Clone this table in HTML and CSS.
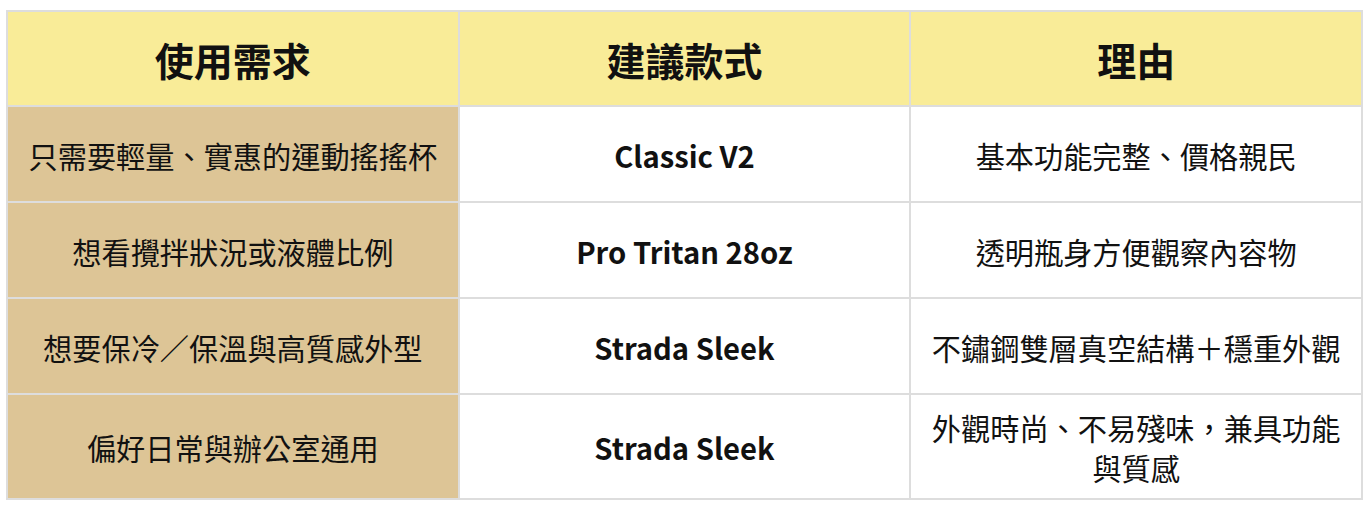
FILE: index.html
```html
<!DOCTYPE html>
<html lang="zh-Hant">
<head>
<meta charset="utf-8">
<link rel="stylesheet" href="styles.css">
</head>
<body>
<div class="wrap">
<table class="cmp">
  <colgroup><col class="c1"><col class="c2"><col class="c3"></colgroup>
  <thead>
    <tr><th>使用需求</th><th>建議款式</th><th>理由</th></tr>
  </thead>
  <tbody>
    <tr><td class="need">只需要輕量、實惠的運動搖搖杯</td><td class="model">Classic V2</td><td>基本功能完整、價格親民</td></tr>
    <tr><td class="need">想看攪拌狀況或液體比例</td><td class="model">Pro Tritan 28oz</td><td>透明瓶身方便觀察內容物</td></tr>
    <tr><td class="need">想要保冷／保溫與高質感外型</td><td class="model">Strada Sleek</td><td>不鏽鋼雙層真空結構＋穩重外觀</td></tr>
    <tr><td class="need">偏好日常與辦公室通用</td><td class="model">Strada Sleek</td><td>外觀時尚、不易殘味，兼具功能與質感</td></tr>
  </tbody>
</table>
</div>
</body>
</html>
```

FILE: styles.css
```css
html, body {
  margin: 0;
  padding: 0;
  background: #ffffff;
}
body {
  font-family: "Noto Sans CJK TC", "Noto Sans", sans-serif;
  color: #111111;
}
.wrap {
  padding: 10px 0 0 6px;
}
.cmp {
  width: 1357px;
  border-collapse: collapse;
  table-layout: fixed;
  border: 2px solid #dddddd;
}
.cmp th,
.cmp td {
  border: 2px solid #dddddd;
  text-align: center;
  vertical-align: middle;
  padding: 12px 12px 11px;
  line-height: 40px;
}
.cmp th {
  background: #f9ec98;
  font-size: 39px;
  font-weight: 700;
  height: 70px;
}
.cmp td {
  font-size: 29.2px;
  font-weight: 400;
  height: 71px;
}
.cmp td.need {
  background: #ddc596;
}
.cmp td.model {
  font-weight: 700;
}
```
